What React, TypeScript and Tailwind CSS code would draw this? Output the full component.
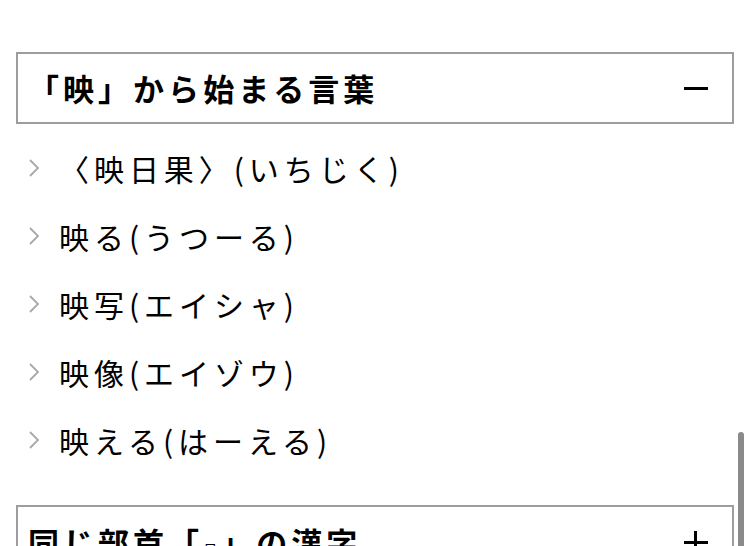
import React from 'react'

const words = ['〈映日果〉(いちじく)', '映る(うつーる)', '映写(エイシャ)', '映像(エイゾウ)', '映える(はーえる)']

function Chevron() {
  return (
    <svg width="12" height="20" viewBox="0 0 12 20" className="shrink-0">
      <path d="M2 2 L10 10 L2 18" fill="none" stroke="#a8a8a8" strokeWidth="1.8" />
    </svg>
  )
}

export default function App() {
  return (
    <div
      className="relative h-[546px] w-[750px] overflow-hidden bg-white text-black"
      style={{ fontFamily: '"Noto Sans CJK JP", "Noto Sans", sans-serif' }}
    >
      <div className="px-4 pt-[52px]">
        <div className="flex h-[72px] items-center justify-between border-2 border-[#9d9d9d] pl-[10px] pr-[24px]">
          <h2 className="text-[31px] font-bold tracking-[0.13em]">「映」から始まる言葉</h2>
          <span className="block h-[3px] w-[24px] bg-black" />
        </div>
        <ul className="pt-[10px]">
          {words.map((w) => (
            <li key={w} className="flex h-[68px] items-center gap-[19px] pl-[12px]">
              <Chevron />
              <span className="text-[30px] tracking-[0.165em]">{w}</span>
            </li>
          ))}
        </ul>
        <div className="mt-[31px] flex h-[72px] items-start justify-between border-2 border-[#9d9d9d] pl-[10px] pr-[24px] pt-[12px]">
          <h2 className="whitespace-nowrap text-[31px] font-bold tracking-[0.13em]">
            同じ部首「<span className="text-[14px] font-normal">日</span>」の漢字
          </h2>
          <span className="relative mt-[12px] block h-[24px] w-[24px]">
            <span className="absolute left-0 top-[10px] h-[3px] w-[24px] bg-black" />
            <span className="absolute left-[10px] top-0 h-[24px] w-[3px] bg-black" />
          </span>
        </div>
      </div>
      <div className="absolute right-[6px] top-[432px] h-[130px] w-[6px] rounded-full bg-[#8a8a8a]" />
    </div>
  )
}
